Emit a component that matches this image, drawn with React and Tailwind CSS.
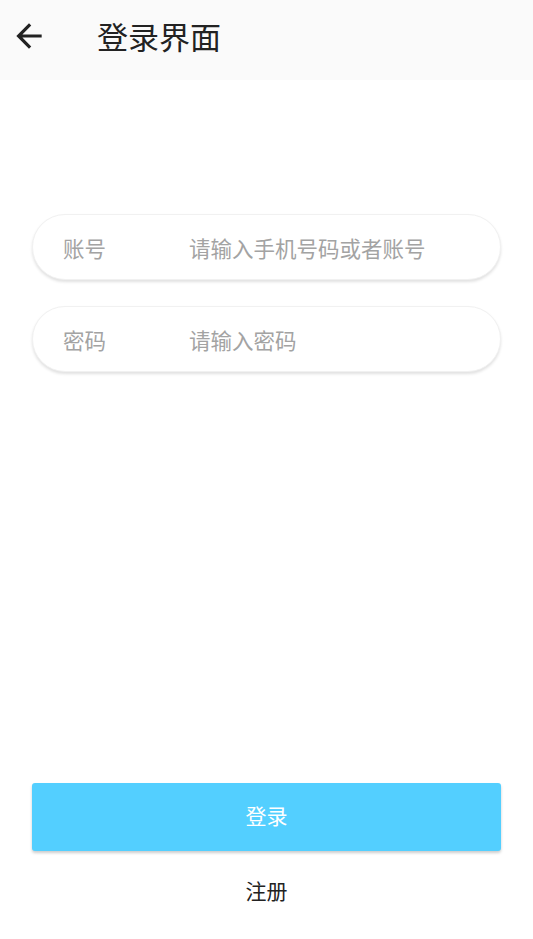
const font = { fontFamily: '"Noto Sans", "Noto Sans CJK SC", sans-serif' };

const BackArrow = () => (
  <svg width="38" height="38" viewBox="0 0 24 24" fill="currentColor">
    <path d="M20 11H7.83l5.59-5.59L12 4l-8 8 8 8 1.41-1.41L7.83 13H20v-2z" />
  </svg>
);

const Field = ({ label, placeholder, type = "text" }) => (
  <div className="flex items-center h-[66px] rounded-full bg-white border border-[#f1f1f1] shadow-[0_2px_3px_rgba(0,0,0,0.12)] px-[30px] pt-[3px]">
    <span className="w-[126px] shrink-0 text-[21.5px] leading-[30px] text-[#a3a3a3]">{label}</span>
    <input
      type={type}
      placeholder={placeholder}
      className="flex-1 min-w-0 bg-transparent outline-none text-[21.5px] leading-[30px] text-[#333] placeholder:text-[#a3a3a3]"
      style={font}
    />
  </div>
);

export default function App() {
  return (
    <div className="h-[939px] flex flex-col bg-white" style={font}>
      {/* HEADER */}
      <div className="h-[80px] bg-[#fafafa] flex items-center shrink-0">
        <button className="w-[58px] flex justify-center pb-[8px] text-[#222]">
          <BackArrow />
        </button>
        <h1 className="ml-[39px] pb-[6px] text-[31px] text-[#222] font-normal">登录界面</h1>
      </div>

      {/* FORM */}
      <div className="px-[32px] mt-[134px] flex flex-col gap-[26px]">
        <Field label="账号" placeholder="请输入手机号码或者账号" />
        <Field label="密码" placeholder="请输入密码" type="password" />
      </div>

      <div className="flex-1" />

      {/* ACTIONS */}
      <div className="px-[32px] pb-[26px] flex flex-col items-stretch">
        <button className="h-[68px] rounded-[3px] bg-[#53cfff] text-white text-[21px] shadow-[0_2px_3px_rgba(0,0,0,0.2)]">
          登录
        </button>
        <button className="mt-[20px] h-[42px] text-[21px] text-[#222]">注册</button>
      </div>
    </div>
  );
}
